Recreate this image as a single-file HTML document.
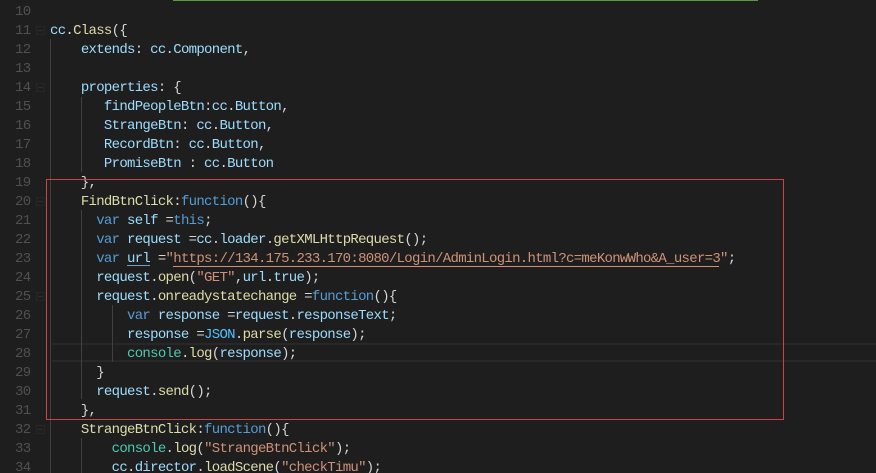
<!DOCTYPE html>
<html><head><meta charset="utf-8">
<style>
html,body{margin:0;padding:0;background:#1e1e1e;}
#p{position:relative;width:876px;height:473px;overflow:hidden;background:#1e1e1e;}
.l,.n{position:absolute;font-family:"Liberation Mono",monospace;font-size:14px;line-height:23px;height:23px;white-space:pre;letter-spacing:-.7px;}
.l{left:50px;color:#d4d4d4;}
.n{left:15px;color:#505050;}
.a{color:#9cdcfe}.f{color:#dcdcaa}.k{color:#569cd6}.s{color:#ce9178}.c{color:#4ec9b0}.j{color:#4fc1ff}
.b{position:absolute;}
.g{position:absolute;width:1px;background:#404040;}
.x{position:absolute;left:36px;width:7px;height:7px;border:1px solid #262626;}
.x:after{content:"";position:absolute;left:1px;top:3px;width:5px;height:1px;background:#2e2e2e;}
</style></head><body><div id="p">
<div class="b" style="left:173px;top:0;width:585px;height:1px;background:#5a9a3e"></div>
<div class="b" style="left:52px;top:343px;width:824px;height:19px;border-top:2px solid #282828;border-bottom:2px solid #282828;box-sizing:border-box"></div>
<div class="g" style="left:50px;top:39px;height:434px"></div>
<div class="g" style="left:81px;top:97px;height:75px"></div>
<div class="g" style="left:81px;top:210px;height:189px"></div>
<div class="g" style="left:112px;top:305px;height:57px"></div>
<div class="g" style="left:81px;top:438px;height:35px"></div>
<div class="x" style="top:26px"></div><div class="x" style="top:83px"></div><div class="x" style="top:197px"></div><div class="x" style="top:292px"></div><div class="x" style="top:425px"></div>
<div class="n" style="top:1px">10</div><div class="n" style="top:20px">11</div><div class="n" style="top:39px">12</div><div class="n" style="top:58px">13</div><div class="n" style="top:77px">14</div><div class="n" style="top:96px">15</div><div class="n" style="top:115px">16</div><div class="n" style="top:134px">17</div><div class="n" style="top:153px">18</div><div class="n" style="top:172px">19</div><div class="n" style="top:191px">20</div><div class="n" style="top:210px">21</div><div class="n" style="top:229px">22</div><div class="n" style="top:248px">23</div><div class="n" style="top:267px">24</div><div class="n" style="top:286px">25</div><div class="n" style="top:305px">26</div><div class="n" style="top:324px">27</div><div class="n" style="top:343px">28</div><div class="n" style="top:362px">29</div><div class="n" style="top:381px">30</div><div class="n" style="top:400px">31</div><div class="n" style="top:419px">32</div><div class="n" style="top:438px">33</div><div class="n" style="top:457px">34</div>
<div class="l" style="top:20px"><span class="a">cc</span>.<span class="f">Class</span>({</div>
<div class="l" style="top:39px">    <span class="a">extends</span>: <span class="a">cc</span>.<span class="a">Component</span>,</div>
<div class="l" style="top:77px">    <span class="a">properties</span>: {</div>
<div class="l" style="top:96px">       <span class="a">findPeopleBtn</span>:<span class="a">cc</span>.<span class="a">Button</span>,</div>
<div class="l" style="top:115px">       <span class="a">StrangeBtn</span>: <span class="a">cc</span>.<span class="a">Button</span>,</div>
<div class="l" style="top:134px">       <span class="a">RecordBtn</span>: <span class="a">cc</span>.<span class="a">Button</span>,</div>
<div class="l" style="top:153px">       <span class="a">PromiseBtn</span> : <span class="a">cc</span>.<span class="a">Button</span></div>
<div class="l" style="top:172px">    },</div>
<div class="l" style="top:191px">    <span class="f">FindBtnClick</span>:<span class="k">function</span>(){</div>
<div class="l" style="top:210px">      <span class="k">var</span> <span class="a">self</span> =<span class="k">this</span>;</div>
<div class="l" style="top:229px">      <span class="k">var</span> <span class="a">request</span> =<span class="a">cc</span>.<span class="a">loader</span>.<span class="f">getXMLHttpRequest</span>();</div>
<div class="l" style="top:248px">      <span class="k">var</span> <span class="a">url</span> =<span class="s">"https://134.175.233.170:8080/Login/AdminLogin.html?c=meKonwWho&amp;A_user=3"</span>;</div>
<div class="l" style="top:267px">      <span class="a">request</span>.<span class="f">open</span>(<span class="s">"GET"</span>,<span class="a">url</span>.<span class="a">true</span>);</div>
<div class="l" style="top:286px">      <span class="a">request</span>.<span class="f">onreadystatechange</span> =<span class="k">function</span>(){</div>
<div class="l" style="top:305px">          <span class="k">var</span> <span class="a">response</span> =<span class="a">request</span>.<span class="a">responseText</span>;</div>
<div class="l" style="top:324px">          <span class="a">response</span> =<span class="j">JSON</span>.<span class="f">parse</span>(<span class="a">response</span>);</div>
<div class="l" style="top:343px">          <span class="c">console</span>.<span class="f">log</span>(<span class="a">response</span>);</div>
<div class="l" style="top:362px">      }</div>
<div class="l" style="top:381px">      <span class="a">request</span>.<span class="f">send</span>();</div>
<div class="l" style="top:400px">    },</div>
<div class="l" style="top:419px">    <span class="f">StrangeBtnClick</span>:<span class="k">function</span>(){</div>
<div class="l" style="top:438px">        <span class="c">console</span>.<span class="f">log</span>(<span class="s">"StrangeBtnClick"</span>);</div>
<div class="l" style="top:457px">        <span class="a">cc</span>.<span class="a">director</span>.<span class="f">loadScene</span>(<span class="s">"checkTimu"</span>);</div>
<div class="b" style="left:127px;top:265px;width:23px;height:1px;background:#6aa0c8"></div>
<div class="b" style="left:173px;top:266px;width:546px;height:1px;background:#ce9178"></div>
<div class="b" style="left:46px;top:179px;width:738px;height:241px;box-sizing:border-box;border-top:1px solid #c94444;border-right:1px solid #c94444;border-bottom:1px solid #c94444;border-left:1px solid #d94040"></div>
</div></body></html>
